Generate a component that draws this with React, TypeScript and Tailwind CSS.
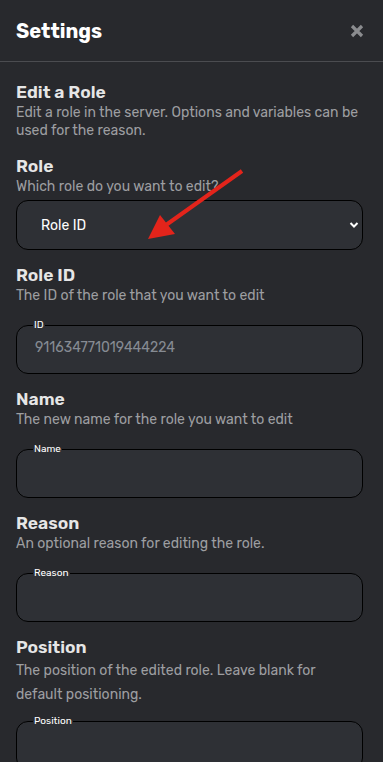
import React from "react";

const font = { fontFamily: "Rubik, Roboto, 'Noto Sans', sans-serif" };

function Heading({ title, desc, descClass }: { title: string; desc: string; descClass?: string }) {
  return (
    <div>
      <h3 className="text-[17.5px] leading-6 font-semibold text-[#e6e6e6]">{title}</h3>
      <p className={descClass ?? "text-[14px] leading-[18px] text-[#9d9ea1]"}>{desc}</p>
    </div>
  );
}

function Field({ label, value }: { label: string; value?: string }) {
  return (
    <fieldset className="mt-[14px] h-[55px] rounded-[12px] border border-black bg-[#2e3035] px-[16px]">
      <legend className="px-[1px] text-[10px] leading-[12px] text-white">{label}</legend>
      <div className="pl-[2px] pt-[7px] text-[14px] leading-5 text-[#868b93]">{value ?? ""}</div>
    </fieldset>
  );
}

export default function App() {
  return (
    <div className="relative min-h-screen h-[762px] overflow-hidden bg-[#28292d]" style={font}>
      <div className="flex h-[62px] items-center justify-between border-b border-[#4b4c50] pl-4 pr-[19px]">
        <h1 className="text-[20px] font-bold text-white">Settings</h1>
        <svg width="14" height="14" viewBox="0 0 14 14">
          <path d="M2 2 L12 12 M12 2 L2 12" stroke="#8b8c8f" strokeWidth="3.2" strokeLinecap="butt" />
        </svg>
      </div>

      <div className="flex flex-col pl-4 pr-5 pt-[18px]">
        <Heading title="Edit a Role" desc="Edit a role in the server. Options and variables can be used for the reason." />

        <div className="mt-[14px]">
          <Heading title="Role" desc="Which role do you want to edit?" />
          <div className="mt-[4px] flex h-[50px] items-center justify-between rounded-[12px] border border-black bg-[#2e3035] pl-[24px] pr-[3px]">
            <span className="text-[14px] text-white">Role ID</span>
            <svg width="10" height="8" viewBox="0 0 10 8">
              <path d="M1.5 2 L5 5.5 L8.5 2" stroke="#ffffff" strokeWidth="2" fill="none" />
            </svg>
          </div>
        </div>

        <div className="mt-[13px]">
          <Heading title="Role ID" desc="The ID of the role that you want to edit" />
          <Field label="ID" value="911634771019444224" />
        </div>

        <div className="mt-[13px]">
          <Heading title="Name" desc="The new name for the role you want to edit" />
          <Field label="Name" />
        </div>

        <div className="mt-[13px]">
          <Heading title="Reason" desc="An optional reason for editing the role." />
          <Field label="Reason" />
        </div>

        <div className="mt-[13px]">
          <Heading
            title="Position"
            desc="The position of the edited role. Leave blank for default positioning."
            descClass="text-[14px] leading-6 text-[#9d9ea1] -mb-[6px] pr-8"
          />
          <Field label="Position" />
        </div>
      </div>

      <svg className="pointer-events-none absolute left-0 top-0" width="383" height="762">
        <line x1="242" y1="171" x2="166" y2="225" stroke="#e3241b" strokeWidth="4" />
        <polygon points="148,239 160,215 175,234" fill="#e3241b" />
      </svg>
    </div>
  );
}
